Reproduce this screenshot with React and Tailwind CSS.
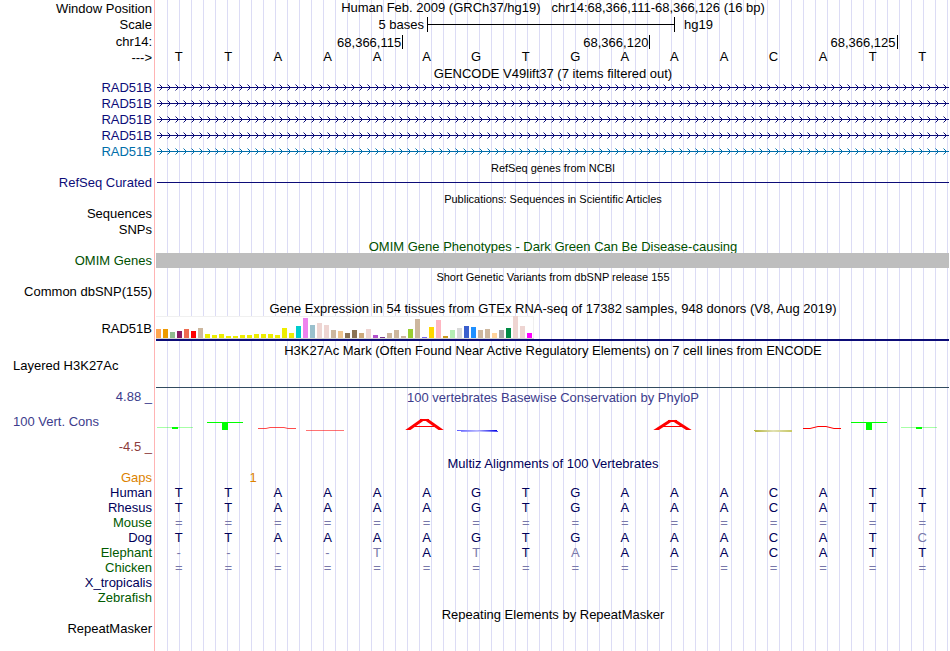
import clsx from 'clsx'

const SEQUENCE = 'TTAAAAGTGAAACATT'

const TRANSCRIPTS = [
  { id: 1, text: 'text-[#0c0c78]' },
  { id: 2, text: 'text-[#0c0c78]' },
  { id: 3, text: 'text-[#0c0c78]' },
  { id: 4, text: 'text-[#0c0c78]' },
  { id: 5, text: 'text-[#006eaa]' },
]

const SPECIES = [
  { name: 'Human', bases: SEQUENCE, color: 'text-[#00005a]' },
  { name: 'Rhesus', bases: SEQUENCE, color: 'text-[#00005a]' },
  { name: 'Mouse', bases: '================', color: 'text-[#005a00]' },
  { name: 'Dog', bases: 'TTAAAAGTGAAACATC', color: 'text-[#00005a]' },
  { name: 'Elephant', bases: '----TATTAAAACATT', color: 'text-[#005a00]' },
  { name: 'Chicken', bases: '================', color: 'text-[#005a00]' },
  { name: 'X_tropicalis', bases: '', color: 'text-[#00005a]' },
  { name: 'Zebrafish', bases: '', color: 'text-[#005a00]' },
]

// one entry per GTEx tissue: [height, color]
const TISSUES = [
  [9, '#ffa54f'], [9, '#ee9a00'], [6, '#8fbc8f'], [7, '#8b1c62'], [9, '#ee6a50'], [7, '#ff0000'],
  [10, '#cdb79e'], [4, '#eeee00'], [3, '#eeee00'], [4, '#eeee00'], [2, '#eeee00'], [2, '#eeee00'],
  [3, '#eeee00'], [3, '#eeee00'], [4, '#eeee00'], [4, '#eeee00'], [4, '#eeee00'], [3, '#eeee00'],
  [10, '#eeee00'], [5, '#eeee00'], [12, '#00cdcd'], [20, '#ee82ee'], [13, '#9ac0cd'], [15, '#eed5d2'],
  [13, '#eed5d2'], [8, '#cdb79e'], [7, '#eec591'], [5, '#8b7355'], [8, '#8b7355'], [5, '#cdaa7d'],
  [9, '#eed5d2'], [3, '#b452cd'], [1, '#7a378b'], [5, '#cdb79e'], [8, '#cdb79e'], [2, '#cdb79e'],
  [9, '#9acd32'], [19, '#cdb79e'], [1, '#7a67ee'], [11, '#ffd700'], [18, '#ffb6c1'], [2, '#cd9b1d'],
  [8, '#b4eeb4'], [10, '#d9d9d9'], [12, '#3a5fcd'], [11, '#1e90ff'], [8, '#cdb79e'], [9, '#cdb79e'],
  [5, '#ffd39b'], [8, '#a6a6a6'], [10, '#008b45'], [22, '#eed5d2'], [12, '#eed5d2'], [5, '#ff00ff'],
]

const Row = ({ label, labelClass = 'items-center justify-end', color, className = 'h-[15px]', children }) => (
  <div className={clsx('flex', className)}>
    <div
      className={clsx(
        'flex w-[155px] shrink-0 border-r border-[#ffb4b4] bg-white pr-0.5 whitespace-pre',
        labelClass,
        color
      )}
    >
      {label}
    </div>
    <div className="flex min-w-0 flex-1 flex-col justify-center border-l border-white">
      {children}
    </div>
  </div>
)

const TrackTitle = ({ small, label, labelColor, className = 'h-4', color, children }) => (
  <Row className={className} label={label} color={labelColor}>
    <h2
      className={clsx(
        'pt-0.5 text-center whitespace-pre',
        small ? 'text-[11px]' : 'text-[13px]',
        color
      )}
    >
      {children}
    </h2>
  </Row>
)

const Bases = ({ bases, mismatch, className }) => (
  <div className={clsx('-ml-0.5 grid grid-cols-16 pr-[3px] text-center', className)}>
    {bases.split('').map((base, i) => (
      <span key={i} className={clsx(mismatch && base !== SEQUENCE[i] && 'text-[#7878aa]')}>
        {base}
      </span>
    ))}
  </div>
)

// intron line with strand arrows every 8px
const StrandLine = ({ id }) => (
  <svg className="block h-[7px] w-full px-px" aria-hidden="true">
    <defs>
      <pattern id={`strand-${id}`} width="8" height="7" patternUnits="userSpaceOnUse">
        <path d="M2.5 0.5 L5.5 3.5 L2.5 6.5" fill="none" stroke="currentColor" />
      </pattern>
    </defs>
    <rect width="100%" height="7" fill={`url(#strand-${id})`} />
    <rect y="3" width="100%" height="1" fill="currentColor" />
  </svg>
)

const ExpressionChart = () => (
  <svg className="block" width="378" height="23" shapeRendering="crispEdges" aria-hidden="true">
    <rect width="378" height="23" fill="#f0f0f0" />
    <rect y="1" width="377" height="21" fill="#ffffff" />
    {TISSUES.map(([height, color], i) => (
      <rect key={i} x={i * 7} y={22 - height} width="5" height={height} fill={color} />
    ))}
    <rect y="22" width="378" height="1" fill="#d2d2d2" />
  </svg>
)

const ConservationChart = () => (
  <svg
    className="block h-[50px] w-full"
    viewBox="1 0 794 50"
    preserveAspectRatio="none"
    aria-hidden="true"
  >
    <defs>
      <linearGradient id="fade-blue">
        <stop offset="0" stopColor="#5a5aff" />
        <stop offset="0.5" stopColor="#b4b4ff" />
        <stop offset="1" stopColor="#0000e6" />
      </linearGradient>
      <linearGradient id="fade-olive">
        <stop offset="0" stopColor="#b4b43c" />
        <stop offset="0.5" stopColor="#e1e1b4" />
        <stop offset="1" stopColor="#c8c864" />
      </linearGradient>
      <clipPath id="above-axis">
        <rect x="0" y="0" width="795" height="25" />
      </clipPath>
    </defs>
    <g fill="#00ff00">
      <rect x="2" y="22" width="36" height="1" opacity="0.35" />
      <rect x="17" y="22" width="6" height="2" />
      <rect x="52" y="17" width="36" height="1" />
      <rect x="67" y="17" width="6" height="8" />
      <rect x="696" y="17" width="36" height="1" />
      <rect x="711" y="17" width="6" height="8" />
      <rect x="746" y="22" width="36" height="1" opacity="0.35" />
      <rect x="761" y="22" width="6" height="2" />
    </g>
    <g stroke="#ff0000" fill="none">
      <path d="M103 23.5 H111 L115 22.5 H129 L133 23.5 H141" opacity="0.7" />
      <path d="M151 25.5 H189" opacity="0.55" />
      <path d="M648 23.5 H655 L663 21.5 H671 L679 23.5 H686" />
    </g>
    <g stroke="#ff0000" strokeWidth="3" clipPath="url(#above-axis)">
      <line x1="250" y1="27" x2="267" y2="15" />
      <line x1="289" y1="27" x2="272" y2="15" />
      <line x1="498" y1="27" x2="515" y2="16" />
      <line x1="537" y1="27" x2="520" y2="16" />
    </g>
    <g fill="#ff0000">
      <rect x="265" y="14" width="9" height="2" />
      <rect x="260" y="21" width="19" height="1" />
      <rect x="513" y="15" width="9" height="2" />
      <rect x="508" y="21" width="19" height="1" />
    </g>
    <rect x="302" y="25" width="40" height="1" fill="url(#fade-blue)" />
    <rect x="306" y="26" width="37" height="1" fill="url(#fade-blue)" opacity="0.7" />
    <rect x="599" y="25" width="38" height="1" fill="url(#fade-olive)" />
    <rect x="600" y="26" width="37" height="1" fill="url(#fade-olive)" />
  </svg>
)

const ScaleBar = () => (
  <div className="flex items-center pl-0.5">
    <span className="flex-1 pr-[3px] text-right">5 bases</span>
    <div className="flex h-[15px] w-[248px] items-center border-x border-black">
      <div className="h-px w-full bg-black" />
    </div>
    <span className="flex-1 pl-[9px]">hg19</span>
  </div>
)

const Ruler = () => (
  <div className="grid grid-cols-16 pr-[3px]">
    {['68,366,115', '68,366,120', '68,366,125'].map((position) => (
      <span key={position} className="col-span-5 h-[14px] border-r border-black pr-px text-right">
        {position}
      </span>
    ))}
  </div>
)

const App = () => {
  return (
    <main className="flex min-h-screen flex-col overflow-hidden bg-white bg-[repeating-linear-gradient(to_right,transparent_0_11px,#dcdcf5_11px_12px)] font-['Liberation_Sans',Arial,sans-serif] text-[13px] leading-[15px] text-black">
      <Row label="Window Position" className="h-4">
        <h1 className="pb-0.5 text-center whitespace-pre">
          {'Human Feb. 2009 (GRCh37/hg19)   chr14:68,366,111-68,366,126 (16 bp)'}
        </h1>
      </Row>
      <Row label="Scale" className="h-[17px]">
        <ScaleBar />
      </Row>
      <Row label="chr14:" className="h-[17px]">
        <Ruler />
      </Row>
      <Row label="--->">
        <Bases bases={SEQUENCE} className="pb-0.5" />
      </Row>

      <TrackTitle className="h-[14px]">GENCODE V49lift37 (7 items filtered out)</TrackTitle>
      {TRANSCRIPTS.map(({ id, text }) => (
        <Row key={id} label="RAD51B" color={text} className={clsx('h-4', text)}>
          <StrandLine id={id} />
        </Row>
      ))}

      <TrackTitle small>RefSeq genes from NCBI</TrackTitle>
      <Row label="RefSeq Curated" color="text-[#0c0c78]">
        <div className="mx-px h-px bg-[#0c0c78]" />
      </Row>

      <TrackTitle small>Publications: Sequences in Scientific Articles</TrackTitle>
      <Row label="Sequences" />
      <Row label="SNPs" className="h-4" />

      <TrackTitle color="text-[#005000]">
        OMIM Gene Phenotypes - Dark Green Can Be Disease-causing
      </TrackTitle>
      <Row label="OMIM Genes" color="text-[#005000]">
        <div className="mr-px h-full bg-[#bebebe]" />
      </Row>

      <TrackTitle small>Short Genetic Variants from dbSNP release 155</TrackTitle>
      <Row label="Common dbSNP(155)" />

      <TrackTitle className="h-[17px]">
        Gene Expression in 54 tissues from GTEx RNA-seq of 17382 samples, 948 donors (V8, Aug 2019)
      </TrackTitle>
      <Row label="RAD51B" className="h-[25px]">
        <ExpressionChart />
        <div className="mr-px h-0.5 bg-[#0c0c78]" />
      </Row>

      <TrackTitle className="h-[17px]">
        H3K27Ac Mark (Often Found Near Active Regulatory Elements) on 7 cell lines from ENCODE
      </TrackTitle>
      <Row label="Layered H3K27Ac" labelClass="items-start pl-[13px]" className="h-[30px]">
        <div className="mt-auto mr-px h-px bg-[#324b5f]" />
      </Row>

      <TrackTitle
        label="4.88 _"
        labelColor="text-[#3c3c8c]"
        color="text-[#3c3c8c]"
        className="h-[17px]"
      >
        100 vertebrates Basewise Conservation by PhyloP
      </TrackTitle>
      <Row
        label={
          <>
            <span className="text-[#3c3c8c]">100 Vert. Cons</span>
            <span className="self-end text-[#8c3c3c]">-4.5 _</span>
          </>
        }
        labelClass="flex-col items-start justify-between pt-[9px] pb-[1px] pl-[13px]"
        className="h-[50px]"
      >
        <ConservationChart />
      </Row>

      <TrackTitle className="h-[15px]" color="text-[#00005a]">
        Multiz Alignments of 100 Vertebrates
      </TrackTitle>
      <Row label="Gaps" color="text-[#dc8200]">
        <div className="-ml-0.5 grid grid-cols-16 pr-[3px] text-center text-[#dc8200]">
          <span className="col-span-2 col-start-2">1</span>
        </div>
      </Row>
      {SPECIES.map(({ name, bases, color }) => (
        <Row key={name} label={name} color={color}>
          <Bases bases={bases} mismatch className="text-[#00005a]" />
        </Row>
      ))}

      <TrackTitle>Repeating Elements by RepeatMasker</TrackTitle>
      <Row label="RepeatMasker" />
      <Row className="flex-1" />
    </main>
  )
}

export default App
